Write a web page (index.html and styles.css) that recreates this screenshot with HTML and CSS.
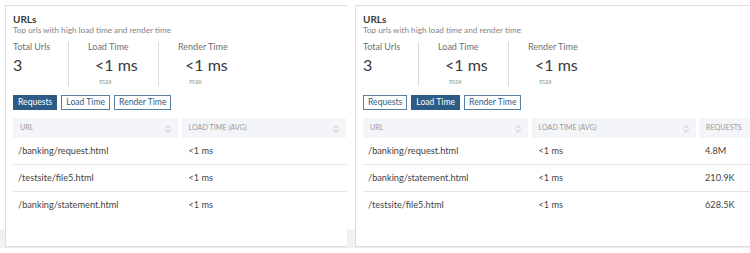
FILE: index.html
```html
<!DOCTYPE html>
<html>
<head>
<meta charset="utf-8">
<link rel="stylesheet" href="styles.css">
</head>
<body>
<div class="page">
  <div class="shot shot-left">
    <div class="gutter gutter-left"></div>
    <section class="card">
      <h2 class="title">URLs</h2>
      <p class="subtitle">Top urls with high load time and render time</p>
      <div class="stats">
        <div class="stat stat-first">
          <div class="stat-label">Total Urls</div>
          <div class="stat-value">3</div>
        </div>
        <div class="stat">
          <div class="stat-label">Load Time</div>
          <div class="stat-value indent">&lt;1 ms</div>
          <div class="stat-max">max</div>
        </div>
        <div class="stat">
          <div class="stat-label">Render Time</div>
          <div class="stat-value indent">&lt;1 ms</div>
          <div class="stat-max">max</div>
        </div>
      </div>
      <div class="tabs">
        <button class="tab active">Requests</button>
        <button class="tab">Load Time</button>
        <button class="tab">Render Time</button>
      </div>
      <div class="table">
        <div class="thead">
          <div class="th">URL<span class="sort"></span></div>
          <div class="th">LOAD TIME (AVG)<span class="sort"></span></div>
          <div class="th"></div>
        </div>
        <div class="tr"><div class="td">/banking/request.html</div><div class="td">&lt;1 ms</div><div class="td"></div></div>
        <div class="tr"><div class="td">/testsite/file5.html</div><div class="td">&lt;1 ms</div><div class="td"></div></div>
        <div class="tr last"><div class="td">/banking/statement.html</div><div class="td">&lt;1 ms</div><div class="td"></div></div>
      </div>
    </section>
  </div>
  <div class="shot shot-right">
    <div class="gutter gutter-right"></div>
    <section class="card">
      <h2 class="title">URLs</h2>
      <p class="subtitle">Top urls with high load time and render time</p>
      <div class="stats">
        <div class="stat stat-first">
          <div class="stat-label">Total Urls</div>
          <div class="stat-value">3</div>
        </div>
        <div class="stat">
          <div class="stat-label">Load Time</div>
          <div class="stat-value indent">&lt;1 ms</div>
          <div class="stat-max">max</div>
        </div>
        <div class="stat">
          <div class="stat-label">Render Time</div>
          <div class="stat-value indent">&lt;1 ms</div>
          <div class="stat-max">max</div>
        </div>
      </div>
      <div class="tabs">
        <button class="tab">Requests</button>
        <button class="tab active">Load Time</button>
        <button class="tab">Render Time</button>
      </div>
      <div class="table">
        <div class="thead">
          <div class="th">URL<span class="sort"></span></div>
          <div class="th">LOAD TIME (AVG)<span class="sort"></span></div>
          <div class="th">REQUESTS</div>
        </div>
        <div class="tr"><div class="td">/banking/request.html</div><div class="td">&lt;1 ms</div><div class="td">4.8M</div></div>
        <div class="tr"><div class="td">/banking/statement.html</div><div class="td">&lt;1 ms</div><div class="td">210.9K</div></div>
        <div class="tr last"><div class="td">/testsite/file5.html</div><div class="td">&lt;1 ms</div><div class="td">628.5K</div></div>
      </div>
    </section>
  </div>
</div>
</body>
</html>
```

FILE: styles.css
```css
* { box-sizing: border-box; }
html, body {
  margin: 0;
  padding: 0;
  background: #fff;
  font-family: Lato, "Open Sans", sans-serif;
  color: #333;
}
.page {
  display: flex;
  width: 750px;
  height: 253px;
  overflow: hidden;
}
.shot {
  display: flex;
  overflow: hidden;
  padding-top: 5px;
  height: 253px;
}
.shot-left { width: 347px; flex: none; }
.shot-right { flex: 1; }
.gutter {
  flex: none;
  height: 248px;
  margin-top: -5px;
  background: linear-gradient(to bottom, #fff 229px, #eff1f4 229px, #eff1f4 248px, #fff 248px);
}
.gutter-left { width: 5px; }
.gutter-right { width: 8px; }
.card {
  flex: none;
  width: 400px;
  height: 242px;
  border: 1px solid #dedede;
  box-shadow: 0 1px 0 #ececec;
  background: #fff;
  padding: 8px 7px 0 7px;
}
.title {
  margin: 0;
  font-size: 10px;
  line-height: 11px;
  font-weight: 700;
  color: #3a3a3a;
}
.subtitle {
  margin: 0;
  font-size: 8.2px;
  line-height: 10px;
  color: #858585;
}
.stats {
  display: flex;
  margin-top: 7px;
  height: 44px;
}
.stat {
  width: 90px;
  border-left: 1px solid #dcdcdc;
  padding-left: 19px;
}
.stat-first {
  width: 55px;
  border-left: none;
  padding-left: 0;
}
.stat-label {
  font-size: 9px;
  line-height: 10px;
  color: #707070;
}
.stat-value {
  margin-top: 4px;
  font-size: 16px;
  line-height: 18px;
  color: #3a3a3a;
}
.stat-value.indent { padding-left: 7px; }
.stat-max {
  margin-top: 3px;
  padding-left: 11px;
  font-size: 7px;
  line-height: 8px;
  color: #9a9a9a;
}
.tabs {
  display: flex;
  gap: 4px;
  margin-top: 9px;
}
.tab {
  height: 15px;
  padding: 0 4px;
  margin: 0;
  font-family: Lato, "Open Sans", sans-serif;
  font-size: 8.6px;
  line-height: 13px;
  color: #2f5d86;
  background: #fff;
  border: 1px solid #5b7fa0;
  border-radius: 0;
}
.tab.active {
  background: #2c5b85;
  border-color: #2c5b85;
  color: #fff;
}
.table {
  margin-top: 8px;
  width: 390px;
}
.thead, .tr {
  display: grid;
  grid-template-columns: 165px 164px 60px;
  column-gap: 3.5px;
}
.thead { height: 20px; }
.th {
  position: relative;
  background: #f4f5f8;
  font-size: 7.2px;
  line-height: 20px;
  color: #9a9a9a;
  padding-left: 7px;
  text-transform: uppercase;
  white-space: nowrap;
}
.sort {
  position: absolute;
  right: 8px;
  top: 7px;
  width: 5px;
  height: 7px;
}
.sort::before, .sort::after {
  content: "";
  position: absolute;
  left: 1px;
  width: 3px;
  height: 3px;
  border-left: 1px solid #d0d0d0;
  border-top: 1px solid #d0d0d0;
}
.sort::before { top: 1px; transform: rotate(45deg); }
.sort::after { top: 3px; transform: rotate(225deg); }
.tr {
  height: 27px;
  border-bottom: 1px solid #e4e4e4;
}
.tr.last { border-bottom-color: transparent; }
.td {
  font-size: 9.2px;
  line-height: 26px;
  padding-left: 5px;
  color: #444;
  white-space: nowrap;
}
.td + .td { padding-left: 7px; }
.td + .td + .td { padding-left: 6px; }
```
